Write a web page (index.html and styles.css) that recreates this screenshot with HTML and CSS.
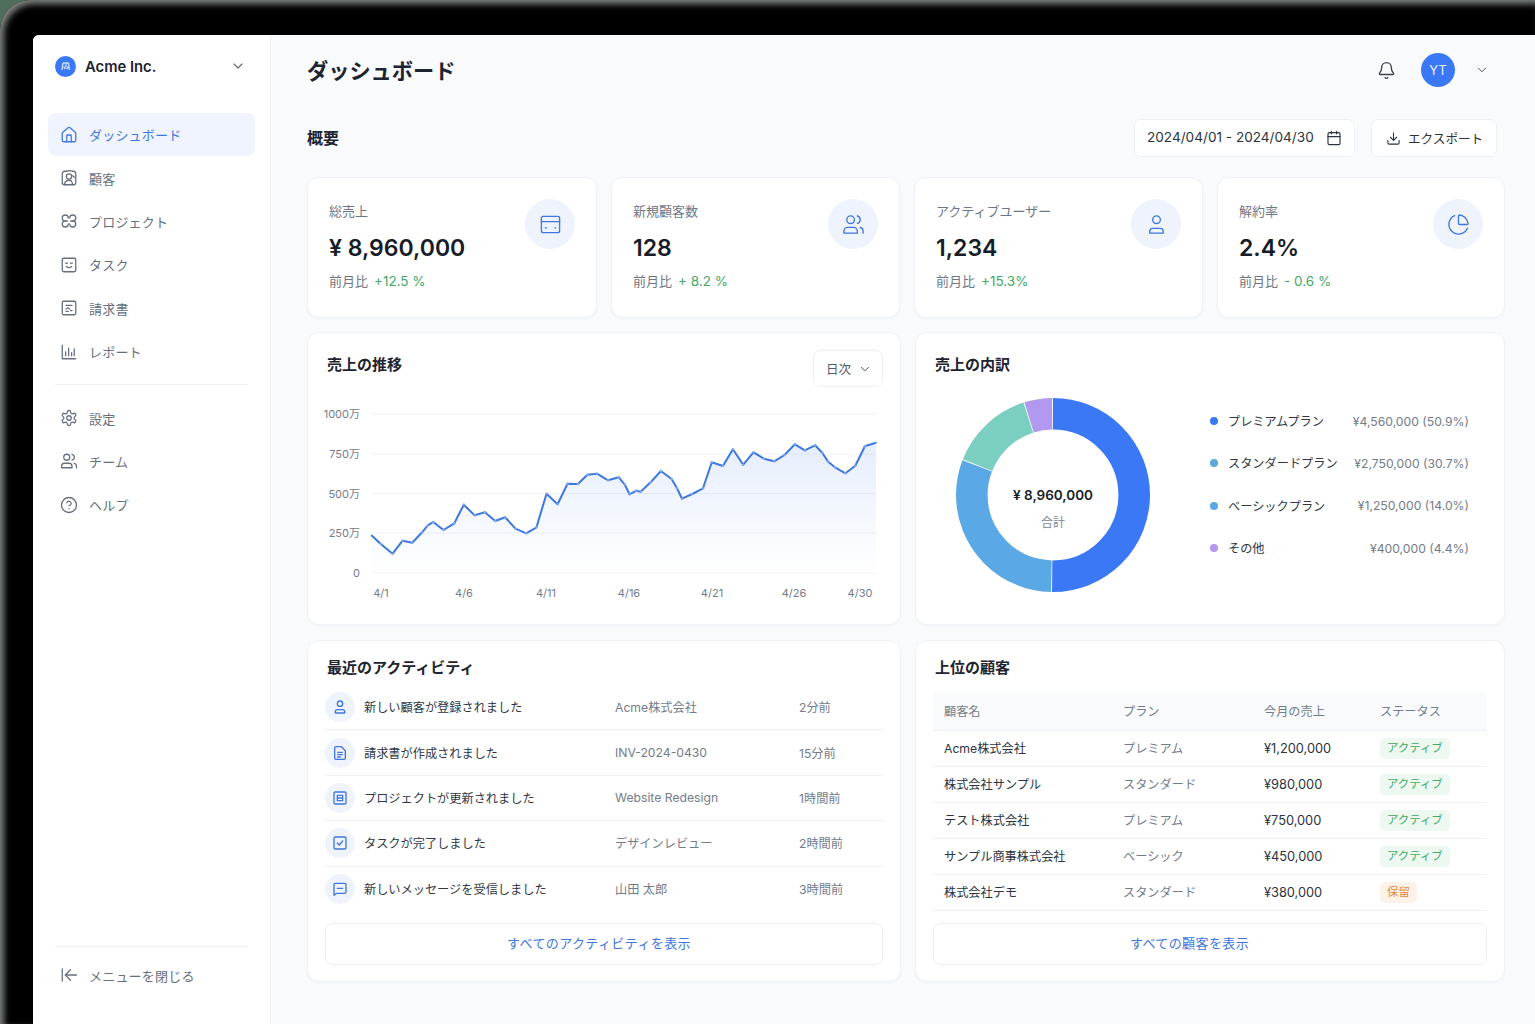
FILE: index.html
```html
<!DOCTYPE html>
<html lang="ja">

<head>
    <meta charset="UTF-8">
    <meta name="viewport" content="width=device-width, initial-scale=1.0">
    <title>ダッシュボード</title>
    <link rel="stylesheet" href="styles.css">
</head>

<body>
    <!-- icon sprite -->
    <svg class="sprite" xmlns="http://www.w3.org/2000/svg">
        <symbol id="i-chevron" viewBox="0 0 24 24"><path d="m6 9 6 6 6-6" /></symbol>
        <symbol id="i-home" viewBox="0 0 24 24"><path d="M15 21v-8a1 1 0 0 0-1-1h-4a1 1 0 0 0-1 1v8" /><path d="M3 10a2 2 0 0 1 .709-1.528l7-5.999a2 2 0 0 1 2.582 0l7 5.999A2 2 0 0 1 21 10v9a2 2 0 0 1-2 2H5a2 2 0 0 1-2-2z" /></symbol>
        <symbol id="i-contact" viewBox="0 0 24 24"><path d="M9 3H6a3 3 0 0 0-3 3v12a3 3 0 0 0 3 3h12a3 3 0 0 0 3-3V6a3 3 0 0 0-3-3h-1" /><path d="M9 3c3-1.500 5-1 8 0" /><circle cx="12" cy="10" r="3.500" /><path d="M6 21c.4-3.600 2.600-6 6-6 1.500 0 3 .5 3.500 1.500M17 21l-1-3" /><path d="m17 9 2 2" /></symbol>
        <symbol id="i-project" viewBox="0 0 24 24"><path d="M7 12a4 4 0 1 1 4-4M7 12a4 4 0 1 0 4 4M13 8a4 4 0 1 1 4 4M13 16a4 4 0 1 0 4-4" /><path d="M7 12h3M14 12h3" /></symbol>
        <symbol id="i-task" viewBox="0 0 24 24"><rect x="3" y="3" width="18" height="18" rx="2" /><path d="M7.500 9.500h2.500M14 9.500h2.500M8.500 14c2 1.600 5 1.600 7 0" /></symbol>
        <symbol id="i-invoice" viewBox="0 0 24 24"><rect x="3" y="3" width="18" height="18" rx="2" /><path d="M8 8.500h8M8 13.500l2.500-2 2.500 2M8 16.500h3M14 15.500h2" /></symbol>
        <symbol id="i-report" viewBox="0 0 24 24"><path d="M3 3v18h18" /><path d="M7.500 17v-5M11.500 17V7M15.500 17v-4M19 17V8" /></symbol>
        <symbol id="i-gear" viewBox="0 0 24 24"><path d="M12.220 2h-.44a2 2 0 0 0-2 2v.18a2 2 0 0 1-1 1.730l-.43.25a2 2 0 0 1-2 0l-.15-.08a2 2 0 0 0-2.730.73l-.22.38a2 2 0 0 0 .73 2.730l.15.1a2 2 0 0 1 1 1.720v.51a2 2 0 0 1-1 1.740l-.15.09a2 2 0 0 0-.73 2.730l.22.38a2 2 0 0 0 2.730.73l.15-.08a2 2 0 0 1 2 0l.43.25a2 2 0 0 1 1 1.730V20a2 2 0 0 0 2 2h.44a2 2 0 0 0 2-2v-.18a2 2 0 0 1 1-1.730l.43-.25a2 2 0 0 1 2 0l.15.08a2 2 0 0 0 2.730-.73l.22-.39a2 2 0 0 0-.73-2.730l-.15-.08a2 2 0 0 1-1-1.740v-.5a2 2 0 0 1 1-1.740l.15-.09a2 2 0 0 0 .73-2.730l-.22-.38a2 2 0 0 0-2.730-.73l-.15.08a2 2 0 0 1-2 0l-.43-.25a2 2 0 0 1-1-1.730V4a2 2 0 0 0-2-2z" /><circle cx="12" cy="12" r="3" /></symbol>
        <symbol id="i-users" viewBox="0 0 24 24"><path d="M16 21v-2a4 4 0 0 0-4-4H6a4 4 0 0 0-4 4v2z" /><path d="M16 3.128a4 4 0 0 1 0 7.744" /><path d="M22 21v-2a4 4 0 0 0-3-3.870" /><circle cx="9" cy="7" r="4" /></symbol>
        <symbol id="i-help" viewBox="0 0 24 24"><circle cx="12" cy="12" r="10" /><path d="M9.090 9a3 3 0 0 1 5.830 1c0 2-3 3-3 3" /><path d="M12 17h.01" /></symbol>
        <symbol id="i-collapse" viewBox="0 0 24 24"><path d="M3 4v16" /><path d="M22 12H8" /><path d="m14 5-7 7 7 7" /></symbol>
        <symbol id="i-bell" viewBox="0 0 24 24"><path d="M10.268 21a2 2 0 0 0 3.464 0" /><path d="M3.262 15.326A1 1 0 0 0 4 17h16a1 1 0 0 0 .74-1.673C19.410 13.956 18 12.499 18 8A6 6 0 0 0 6 8c0 4.499-1.411 5.956-2.738 7.326" /></symbol>
        <symbol id="i-calendar" viewBox="0 0 24 24"><path d="M8 2v4M16 2v4" /><rect x="3" y="4" width="18" height="18" rx="2" /><path d="M3 10h18" /></symbol>
        <symbol id="i-download" viewBox="0 0 24 24"><path d="M12 15V3" /><path d="M21 15v4a2 2 0 0 1-2 2H5a2 2 0 0 1-2-2v-4" /><path d="m7 10 5 5 5-5" /></symbol>
        <symbol id="i-card" viewBox="0 0 24 24"><rect x="2.500" y="3.500" width="19" height="17" rx="2" /><path d="M2.500 9h19M6.500 15.500h1.500M16.500 15.500h1" /></symbol>
        <symbol id="i-user" viewBox="0 0 24 24"><path d="M19 21v-2a3 3 0 0 0-3-3H8a3 3 0 0 0-3 3v2z" /><circle cx="12" cy="7" r="4" /></symbol>
        <symbol id="i-pie" viewBox="0 0 24 24"><path d="M21 12c.552 0 1.005-.449.95-.998a10 10 0 0 0-8.953-8.951c-.55-.055-.998.398-.998.95v8a1 1 0 0 0 1 1z" /><path d="M21.210 15.890A10 10 0 1 1 8 2.830" /></symbol>
        <symbol id="i-doc" viewBox="0 0 24 24"><path d="M14 2.500H6a2 2 0 0 0-2 2v15a2 2 0 0 0 2 2h12a2 2 0 0 0 2-2v-11z" /><path d="M8.500 11h7M8.500 14.500h7M8.500 18h4" /></symbol>
        <symbol id="i-board" viewBox="0 0 24 24"><rect x="3" y="3" width="18" height="18" rx="2" /><path d="M8 8h8v8H8zM8 12h8" /></symbol>
        <symbol id="i-check" viewBox="0 0 24 24"><rect x="3" y="3" width="18" height="18" rx="2" /><path d="m8 12 3 3 5-6" /></symbol>
        <symbol id="i-message" viewBox="0 0 24 24"><path d="M3 5.500a2 2 0 0 1 2-2h14a2 2 0 0 1 2 2v11a2 2 0 0 1-2 2H7l-4 3z" /><path d="M8 11h8" /></symbol>
    </svg>

    <div class="device">
        <div class="screen">

            <aside class="sidebar">
                <div class="brand">
                    <span class="brand-logo">
                        <svg viewBox="0 0 24 24"><path d="M9 8h6.500M9 8l-1 8M12.500 8v5M15.500 8l1 8M10 12l1.500 3M15 12l-1.500 3" /></svg>
                    </span>
                    <span class="brand-name">Acme Inc.</span>
                    <svg class="icon brand-chevron"><use href="#i-chevron" /></svg>
                </div>

                <nav class="nav">
                    <a class="nav-item active" href="#"><svg class="icon"><use href="#i-home" /></svg>ダッシュボード</a>
                    <a class="nav-item" href="#"><svg class="icon"><use href="#i-contact" /></svg>顧客</a>
                    <a class="nav-item" href="#"><svg class="icon"><use href="#i-project" /></svg>プロジェクト</a>
                    <a class="nav-item" href="#"><svg class="icon"><use href="#i-task" /></svg>タスク</a>
                    <a class="nav-item" href="#"><svg class="icon"><use href="#i-invoice" /></svg>請求書</a>
                    <a class="nav-item" href="#"><svg class="icon"><use href="#i-report" /></svg>レポート</a>
                </nav>
                <div class="nav-divider"></div>
                <nav class="nav">
                    <a class="nav-item" href="#"><svg class="icon"><use href="#i-gear" /></svg>設定</a>
                    <a class="nav-item" href="#"><svg class="icon"><use href="#i-users" /></svg>チーム</a>
                    <a class="nav-item" href="#"><svg class="icon"><use href="#i-help" /></svg>ヘルプ</a>
                </nav>

                <div class="sidebar-foot">
                    <a class="nav-item" href="#"><svg class="icon"><use href="#i-collapse" /></svg>メニューを閉じる</a>
                </div>
            </aside>

            <main class="main">
                <header class="topbar">
                    <h1>ダッシュボード</h1>
                    <div class="topbar-right">
                        <svg class="icon bell"><use href="#i-bell" /></svg>
                        <span class="avatar">YT</span>
                        <svg class="icon topbar-chevron"><use href="#i-chevron" /></svg>
                    </div>
                </header>

                <div class="toolbar">
                    <h2>概要</h2>
                    <div class="toolbar-actions">
                        <button class="btn date-btn"><span>2024/04/01 - 2024/04/30</span><svg class="icon"><use href="#i-calendar" /></svg></button>
                        <button class="btn export-btn"><svg class="icon"><use href="#i-download" /></svg><span>エクスポート</span></button>
                    </div>
                </div>

                <section class="stats">
                    <div class="card stat">
                        <div>
                            <div class="stat-label">総売上</div>
                            <div class="stat-value">¥ 8,960,000</div>
                            <div class="stat-delta">前月比<span>+12.5 %</span></div>
                        </div>
                        <span class="stat-icon"><svg class="icon"><use href="#i-card" /></svg></span>
                    </div>
                    <div class="card stat">
                        <div>
                            <div class="stat-label">新規顧客数</div>
                            <div class="stat-value">128</div>
                            <div class="stat-delta">前月比<span>+ 8.2 %</span></div>
                        </div>
                        <span class="stat-icon"><svg class="icon"><use href="#i-users" /></svg></span>
                    </div>
                    <div class="card stat">
                        <div>
                            <div class="stat-label">アクティブユーザー</div>
                            <div class="stat-value">1,234</div>
                            <div class="stat-delta">前月比<span>+15.3%</span></div>
                        </div>
                        <span class="stat-icon"><svg class="icon"><use href="#i-user" /></svg></span>
                    </div>
                    <div class="card stat">
                        <div>
                            <div class="stat-label">解約率</div>
                            <div class="stat-value">2.4%</div>
                            <div class="stat-delta">前月比<span>- 0.6 %</span></div>
                        </div>
                        <span class="stat-icon"><svg class="icon"><use href="#i-pie" /></svg></span>
                    </div>
                </section>

                <section class="two-col">
                    <div class="card chart-card">
                        <div class="card-head">
                            <h3>売上の推移</h3>
                            <button class="btn range-btn">日次<svg class="icon"><use href="#i-chevron" /></svg></button>
                        </div>
                        <svg class="line-chart" viewBox="1 0 592 225">
                            <defs>
                                <linearGradient id="area" x1="0" y1="0" x2="0" y2="1">
                                    <stop offset="0" stop-color="#3f7be8" stop-opacity=".13" />
                                    <stop offset="1" stop-color="#3f7be8" stop-opacity="0" />
                                </linearGradient>
                                <marker id="pt" viewBox="0 0 4 4" refX="2" refY="2" markerWidth="4" markerHeight="4" markerUnits="userSpaceOnUse">
                                    <circle cx="2" cy="2" r="1.300" fill="#7fa9ee" />
                                </marker>
                            </defs>
                            <g class="grid-lines">
                                <path d="M65 19H570M65 59H570M65 98.500H570M65 138H570M65 178H570" />
                            </g>
                            <g class="y-labels">
                                <text x="53" y="23">1000万</text>
                                <text x="53" y="63">750万</text>
                                <text x="53" y="102.500">500万</text>
                                <text x="53" y="142">250万</text>
                                <text x="53" y="182">0</text>
                            </g>
                            <g class="x-labels">
                                <text x="74" y="202">4/1</text>
                                <text x="157" y="202">4/6</text>
                                <text x="239" y="202">4/11</text>
                                <text x="322" y="202">4/16</text>
                                <text x="405" y="202">4/21</text>
                                <text x="487" y="202">4/26</text>
                                <text x="553" y="202">4/30</text>
                            </g>
                            <path fill="url(#area)" d="M64.200 140 73.800 149 85.600 158.700 95.600 145.700 105.200 147.700 115.100 137.300 120.500 130.700 126.200 127 136.500 135 147.300 128.300 156.800 109.700 167.500 120.300 177.900 117.300 188.200 126 198.200 122.300 208.500 133.700 219.200 138.300 229.500 132.300 239.500 98.700 250.600 109.300 260.500 88.700 270.900 89 280.400 79.700 290 78.700 301.100 85.300 311.800 82.300 317.600 89.300 322.500 99.300 329.400 95.700 333.600 96.700 343.600 87.300 353.900 76 364.600 84 370 93.300 375 103.700 385.300 99 396 93.300 404.800 67.300 415.900 71 425.900 54.300 436.200 69.700 446.500 57.300 456.900 63.700 467.200 66.300 477.500 60 487.900 49.300 497.800 55.300 508.100 50.300 515.400 58 521.100 66.700 528 72.300 538.400 78.300 548.300 70.700 557.900 51.300 569 47.700V178H64.200z" />
                            <polyline class="line" marker-mid="url(#pt)" marker-end="url(#pt)" points="64.200,140 73.800,149 85.600,158.700 95.600,145.700 105.200,147.700 115.100,137.300 120.500,130.700 126.200,127 136.500,135 147.300,128.300 156.800,109.700 167.500,120.300 177.900,117.300 188.200,126 198.200,122.300 208.500,133.700 219.200,138.300 229.500,132.300 239.500,98.700 250.600,109.300 260.500,88.700 270.900,89 280.400,79.700 290,78.700 301.100,85.300 311.800,82.300 317.600,89.300 322.500,99.300 329.400,95.700 333.600,96.700 343.600,87.300 353.900,76 364.600,84 370,93.300 375,103.700 385.300,99 396,93.300 404.800,67.300 415.900,71 425.900,54.300 436.200,69.700 446.500,57.300 456.900,63.700 467.200,66.300 477.500,60 487.900,49.300 497.800,55.300 508.100,50.300 515.400,58 521.100,66.700 528,72.300 538.400,78.300 548.300,70.700 557.900,51.300 569,47.700" />
                        </svg>
                    </div>

                    <div class="card">
                        <div class="card-head">
                            <h3>売上の内訳</h3>
                        </div>
                        <div class="donut-body">
                            <svg class="donut" viewBox="0 0 196 196">
                                <g class="donut-ring" transform="rotate(-90 98 98)">
                                    <circle cx="98" cy="98" r="81.200" pathLength="360" stroke="#3b78f5" stroke-dasharray="180.600 179.400" />
                                    <circle cx="98" cy="98" r="81.200" pathLength="360" stroke="#5ba8e6" stroke-dasharray="109.800 250.200" stroke-dashoffset="-181.200" />
                                    <circle cx="98" cy="98" r="81.200" pathLength="360" stroke="#7acfc0" stroke-dasharray="50.600 309.400" stroke-dashoffset="-291.600" />
                                    <circle cx="98" cy="98" r="81.200" pathLength="360" stroke="#b199ef" stroke-dasharray="16.600 343.400" stroke-dashoffset="-342.800" />
                                </g>
                                <text class="donut-total" x="98" y="103">¥ 8,960,000</text>
                                <text class="donut-caption" x="98" y="130">合計</text>
                            </svg>
                            <ul class="legend">
                                <li><i class="dot dot-premium"></i><span class="legend-name">プレミアムプラン</span><span class="legend-value">¥4,560,000 (50.9%)</span></li>
                                <li><i class="dot dot-standard"></i><span class="legend-name">スタンダードプラン</span><span class="legend-value">¥2,750,000 (30.7%)</span></li>
                                <li><i class="dot dot-basic"></i><span class="legend-name">ベーシックプラン</span><span class="legend-value">¥1,250,000 (14.0%)</span></li>
                                <li><i class="dot dot-other"></i><span class="legend-name">その他</span><span class="legend-value">¥400,000 (4.4%)</span></li>
                            </ul>
                        </div>
                    </div>
                </section>

                <section class="two-col bottom">
                    <div class="card list-card">
                        <h3>最近のアクティビティ</h3>
                        <ul class="activity">
                            <li><span class="activity-icon"><svg class="icon"><use href="#i-user" /></svg></span><span class="activity-text">新しい顧客が登録されました</span><span class="muted">Acme株式会社</span><span class="muted">2分前</span></li>
                            <li><span class="activity-icon"><svg class="icon"><use href="#i-doc" /></svg></span><span class="activity-text">請求書が作成されました</span><span class="muted">INV-2024-0430</span><span class="muted">15分前</span></li>
                            <li><span class="activity-icon"><svg class="icon"><use href="#i-board" /></svg></span><span class="activity-text">プロジェクトが更新されました</span><span class="muted">Website Redesign</span><span class="muted">1時間前</span></li>
                            <li><span class="activity-icon"><svg class="icon"><use href="#i-check" /></svg></span><span class="activity-text">タスクが完了しました</span><span class="muted">デザインレビュー</span><span class="muted">2時間前</span></li>
                            <li><span class="activity-icon"><svg class="icon"><use href="#i-message" /></svg></span><span class="activity-text">新しいメッセージを受信しました</span><span class="muted">山田 太郎</span><span class="muted">3時間前</span></li>
                        </ul>
                        <a class="more-btn more-activity" href="#">すべてのアクティビティを表示</a>
                    </div>

                    <div class="card list-card">
                        <h3>上位の顧客</h3>
                        <table class="customers">
                            <thead>
                                <tr><th>顧客名</th><th>プラン</th><th>今月の売上</th><th>ステータス</th></tr>
                            </thead>
                            <tbody>
                                <tr><td>Acme株式会社</td><td class="muted">プレミアム</td><td class="amount">¥1,200,000</td><td><span class="pill">アクティブ</span></td></tr>
                                <tr><td>株式会社サンプル</td><td class="muted">スタンダード</td><td class="amount">¥980,000</td><td><span class="pill">アクティブ</span></td></tr>
                                <tr><td>テスト株式会社</td><td class="muted">プレミアム</td><td class="amount">¥750,000</td><td><span class="pill">アクティブ</span></td></tr>
                                <tr><td>サンプル商事株式会社</td><td class="muted">ベーシック</td><td class="amount">¥450,000</td><td><span class="pill">アクティブ</span></td></tr>
                                <tr><td>株式会社デモ</td><td class="muted">スタンダード</td><td class="amount">¥380,000</td><td><span class="pill pill-hold">保留</span></td></tr>
                            </tbody>
                        </table>
                        <a class="more-btn more-customers" href="#">すべての顧客を表示</a>
                    </div>
                </section>
            </main>

        </div>
    </div>
</body>

</html>
```

FILE: styles.css
```css
* {
    box-sizing: border-box;
}

body {
    margin: 0;
    height: 100vh;
    overflow: hidden;
    background: #4f6f5c;
    color: #1d2430;
    font-family: Inter, "Noto Sans CJK JP", sans-serif;
}

.sprite {
    display: none;
}

.icon {
    width: 18px;
    height: 18px;
    flex: none;
    fill: none;
    stroke: currentColor;
    stroke-width: 1.7;
    stroke-linecap: round;
    stroke-linejoin: round;
}

h1,
h2,
h3,
ul {
    margin: 0;
    padding: 0;
}

ul {
    list-style: none;
}

a {
    text-decoration: none;
}

/* device frame */
.device {
    height: 100%;
    padding: 35px 0 0 33px;
    background: #000;
    border-radius: 30px 0 0 0;
    box-shadow: inset 4px 4px 6px #7e827f;
}

.screen {
    display: flex;
    height: 100%;
    background: #f8fafc;
    border-radius: 6px 0 0 0;
    overflow: hidden;
}

/* sidebar */
.sidebar {
    display: flex;
    flex-direction: column;
    width: 238px;
    flex: none;
    padding: 0 15px;
    background: #fff;
    border-right: 1px solid #eff2f6;
}

.brand {
    display: flex;
    align-items: center;
    height: 62px;
    margin-bottom: 16px;
    padding: 0 9px 0 7px;
}

.brand-logo {
    display: flex;
    width: 21px;
    height: 21px;
    border-radius: 50%;
    background: #3b78f5;
}

.brand-logo svg {
    fill: none;
    stroke: #c9dbff;
    stroke-width: 1.6;
}

.brand-name {
    margin: 1px 0 0 9px;
    font-size: 14.800px;
    font-weight: 600;
}

.brand-chevron {
    width: 16px;
    height: 16px;
    margin-left: auto;
    color: #5f6875;
}

.nav-item {
    display: flex;
    align-items: center;
    gap: 11px;
    height: 43.400px;
    padding: 0 12px;
    border-radius: 8px;
    color: #666f7d;
    font-size: 13px;
    letter-spacing: .2px;
}

.nav-item.active {
    background: #eff4fe;
    color: #3f76e0;
}

.nav-divider {
    height: 1px;
    margin: 11px 7px 11px;
    background: #edf0f4;
}

.sidebar-foot {
    margin: auto 7px 27px;
    padding-top: 7px;
    border-top: 1px solid #edf0f4;
}

.sidebar-foot .nav-item {
    margin: 0 -7px;
}

/* main */
.main {
    flex: 1;
    min-width: 0;
    padding: 0 30px 0 36px;
}

.topbar {
    display: flex;
    align-items: center;
    justify-content: space-between;
    height: 70px;
}

h1 {
    margin-top: -2px;
    font-size: 21.200px;
    font-weight: 600;
}

.topbar-right {
    display: flex;
    align-items: center;
    padding-right: 16px;
}

.bell {
    width: 19px;
    height: 19px;
    color: #3a4250;
}

.avatar {
    display: flex;
    align-items: center;
    justify-content: center;
    width: 34px;
    height: 34px;
    margin: 0 20px 0 25px;
    border-radius: 50%;
    background: #3b78f5;
    color: #e8f0ff;
    font-size: 13px;
}

.topbar-chevron {
    width: 14px;
    height: 14px;
    color: #4a5260;
}

.toolbar {
    display: flex;
    align-items: center;
    justify-content: space-between;
    margin-top: 14px;
    padding-right: 8px;
}

h2 {
    margin-top: -2px;
    font-size: 16px;
    font-weight: 600;
}

.toolbar-actions {
    display: flex;
    gap: 16px;
}

.btn {
    display: flex;
    align-items: center;
    border: 1px solid #edf0f4;
    border-radius: 7px;
    background: #fff;
    color: #2b3340;
    font-family: inherit;
    white-space: nowrap;
}

.btn span {
    margin-top: -2px;
}

.date-btn {
    justify-content: space-between;
    width: 221px;
    height: 38px;
    padding: 0 12px;
    font-size: 13.600px;
}

.date-btn .icon {
    width: 16px;
    height: 16px;
}

.export-btn {
    gap: 7px;
    width: 126px;
    height: 38px;
    padding: 0 14px;
    font-size: 12.600px;
}

.export-btn .icon {
    width: 15px;
    height: 15px;
}

.card {
    background: #fff;
    border: 1px solid #eef1f5;
    border-radius: 12px;
    box-shadow: 0 1px 3px rgba(30, 50, 90, 0.03);
}

.stats {
    display: grid;
    grid-template-columns: 290fr 289fr 289fr 288fr;
    gap: 14px;
    margin-top: 20px;
}

.stat {
    display: flex;
    justify-content: space-between;
    height: 141px;
    padding: 21px;
}

.stat-label {
    margin-top: 2px;
    color: #6d7684;
    font-size: 13px;
    line-height: 20px;
}

.stat-value {
    margin-top: 12px;
    color: #161c28;
    font-size: 23px;
    font-weight: 600;
    line-height: 30px;
}

.stat-delta {
    margin-top: 8px;
    color: #6d7684;
    font-size: 13px;
    line-height: 20px;
}

.stat-delta span {
    margin-left: 6px;
    color: #43a868;
    font-size: 13.500px;
}

.stat-icon {
    display: flex;
    align-items: center;
    justify-content: center;
    width: 50px;
    height: 50px;
    border-radius: 50%;
    background: #eff3fb;
    color: #3f76e0;
}

.stat-icon .icon {
    width: 23px;
    height: 23px;
    stroke-width: 1.400;
}

.two-col {
    display: grid;
    grid-template-columns: 594fr 590fr;
    gap: 14px;
    margin-top: 14px;
}

.two-col>.card {
    height: 293px;
}

.two-col.bottom {
    margin-top: 15px;
}

.two-col.bottom>.card {
    height: 342px;
}

.card-head {
    display: flex;
    align-items: center;
    justify-content: space-between;
    min-height: 37px;
    margin: 17px 17px 0 19px;
}

h3 {
    margin-top: -8px;
    font-size: 15px;
    font-weight: 600;
    line-height: 20px;
}

.range-btn {
    gap: 7px;
    width: 70px;
    height: 37px;
    padding: 0 12px;
    color: #505967;
    font-size: 12.500px;
}

.range-btn .icon {
    width: 14px;
    height: 14px;
}

.line-chart {
    display: block;
    width: 592px;
    height: 225px;
    margin-top: 8px;
}

.grid-lines path {
    fill: none;
    stroke: #f0f2f6;
}

.y-labels,
.x-labels {
    fill: #737c8a;
    font-size: 11px;
}

.y-labels {
    text-anchor: end;
}

.x-labels {
    text-anchor: middle;
}

.line {
    fill: none;
    stroke: #3f78dc;
    stroke-width: 2;
    stroke-linejoin: round;
}

.donut-body {
    display: flex;
    align-items: flex-start;
    margin-top: 9.500px;
    padding-left: 39px;
}

.donut {
    width: 196px;
    height: 196px;
    flex: none;
}

.donut-ring circle {
    fill: none;
    stroke-width: 31.600;
}

.donut-total {
    fill: #161c28;
    font-size: 13.500px;
    font-weight: 600;
    text-anchor: middle;
}

.donut-caption {
    fill: #7b8494;
    font-size: 12px;
    text-anchor: middle;
}

.legend {
    width: 259px;
    margin: 3.500px 0 0 59px;
}

.legend li {
    display: flex;
    align-items: center;
    height: 42.300px;
    font-size: 12.200px;
}

.dot {
    width: 8px;
    height: 8px;
    margin-right: 10px;
    border-radius: 50%;
}

.dot-premium {
    background: #3b78f5;
}

.dot-standard {
    background: #5aa9d8;
}

.dot-basic {
    background: #5aa9e0;
}

.dot-other {
    background: #b199ef;
}

.legend-name {
    color: #2f3744;
}

.legend-value {
    margin-left: auto;
    color: #737c8a;
}

/* activity + table */
.list-card {
    padding: 17px 17px 0;
}

.list-card h3 {
    height: 27px;
    margin: 0 0 0 2px;
}

.muted {
    color: #737c8a;
}

.activity li {
    display: grid;
    grid-template-columns: 39px 251px 184px 1fr;
    align-items: center;
    height: 45.400px;
    border-bottom: 1px solid #eef1f5;
    font-size: 12.200px;
}

.activity li:last-child {
    border-bottom: none;
}

.activity-icon {
    display: flex;
    align-items: center;
    justify-content: center;
    width: 30px;
    height: 30px;
    border-radius: 50%;
    background: #eff3fb;
    color: #3f76e0;
}

.activity-icon .icon {
    width: 16px;
    height: 16px;
    stroke-width: 2;
}

.activity-text {
    color: #2f3744;
}

.more-btn {
    display: flex;
    align-items: center;
    justify-content: center;
    height: 42px;
    margin-top: 11px;
    padding-bottom: 2px;
    border: 1px solid #edf0f4;
    border-radius: 7px;
    background: #fff;
    color: #3f76e0;
    font-size: 13px;
    letter-spacing: .4px;
}

.more-activity {
    padding-right: 10px;
}

.more-customers {
    padding-right: 41px;
}

.customers {
    width: 554px;
    margin-top: 7px;
    border-collapse: collapse;
    table-layout: fixed;
    font-size: 12.200px;
}

.customers th:nth-child(1) {
    width: 179px;
}

.customers th:nth-child(2) {
    width: 141px;
}

.customers th:nth-child(3) {
    width: 116px;
}

.customers th {
    height: 38px;
    padding: 0 11px;
    background: #f8fafc;
    border-bottom: 1px solid #eef1f5;
    color: #737c8a;
    font-weight: 400;
    text-align: left;
}

.customers td {
    height: 36px;
    padding: 0 11px;
    border-bottom: 1px solid #eef1f5;
    color: #2b3340;
}

.customers td.muted {
    color: #737c8a;
}

.customers td.amount {
    font-size: 12.800px;
}

.pill {
    display: inline-block;
    padding: 0 7px;
    border-radius: 5px;
    background: #edf8f1;
    color: #43a868;
    font-size: 11.400px;
    line-height: 21px;
}

.pill-hold {
    background: #fdf2e7;
    color: #e58a3c;
}

.customers+.more-btn {
    margin-top: 12px;
}
```
